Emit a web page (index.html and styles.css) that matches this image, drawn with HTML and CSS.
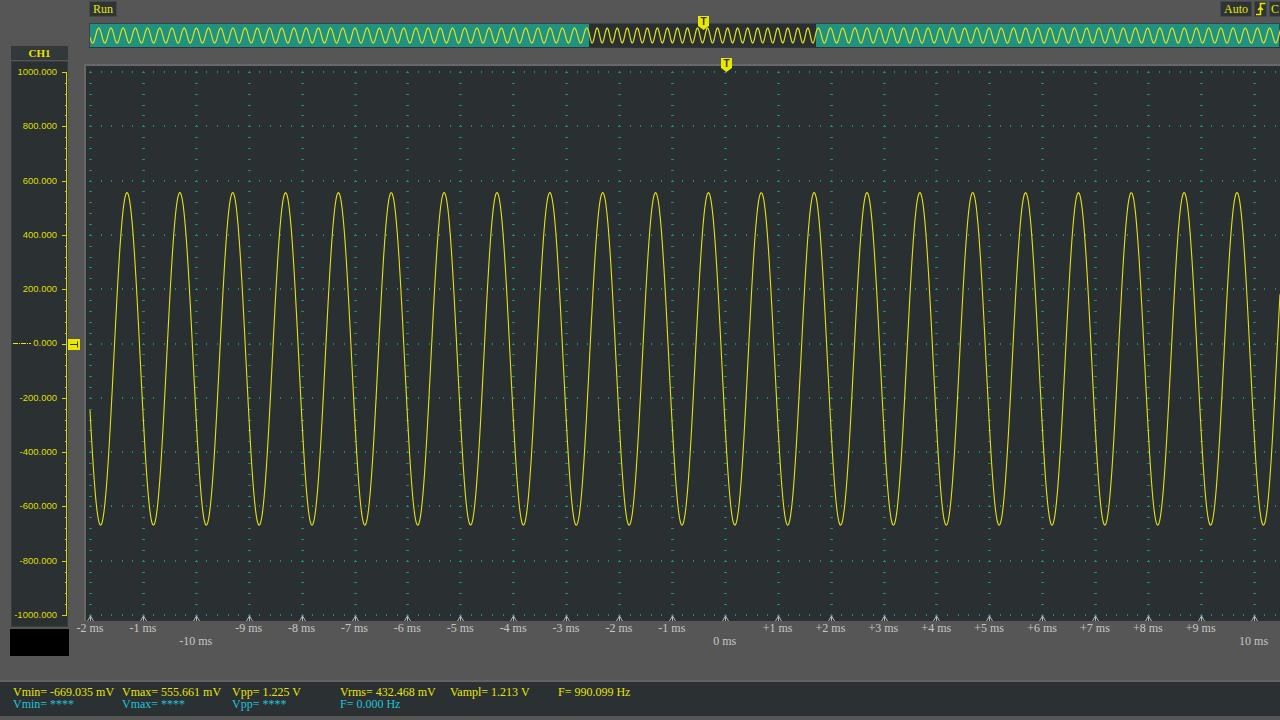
FILE: index.html
```html
<!doctype html>
<html>
    <head>
        <meta charset="utf-8"/>
        <title>CH1 scope</title>
        <link rel="stylesheet" href="styles.css">
    </head>
    <body>
        <div class="app">
            <header class="topbar">
                <span class="btn">Run</span>
                <span class="spacer"></span>
                <span class="btn">Auto</span>
                <span class="btn btn-icon">
                    <svg width="11" height="14" viewBox="0 0 11 14">
                        <path d="M1 12.5H5.5V1.5H10.5M3 8L5.5 5.5L8 8" fill="none" stroke="#e8e800" stroke-width="1.6"/>
                    </svg>
                </span>
                <span class="btn btn-cut">C</span>
            </header>
            <div class="main">
                <aside class="chan">
                    <div class="chan-title">CH1</div>
                    <div class="scale">
                        <div class="scale-labels">
                            <span>1000.000</span>
                            <span>800.000</span>
                            <span>600.000</span>
                            <span>400.000</span>
                            <span>200.000</span>
                            <span class="zero"><i class="zero-line"></i>0.000</span>
                            <span>-200.000</span>
                            <span>-400.000</span>
                            <span>-600.000</span>
                            <span>-800.000</span>
                            <span>-1000.000</span>
                        </div>
                        <svg class="scale-axis" id="axis" width="11" height="566"></svg>
                        <div class="zero-flag">
                            <svg width="12" height="11" viewBox="0 0 12 11">
                                <rect x="0" y="0" width="12" height="11" fill="#e8e800"/>
                                <path d="M2 5.5H9.5M9.5 2.5V8.5" fill="none" stroke="#3a3a10" stroke-width="1"/>
                            </svg>
                        </div>
                    </div>
                    <div class="chan-black"></div>
                </aside>
                <section class="scope">
                    <div class="overview">
                        <svg id="overview" width="1191" height="23"></svg>
                        <div class="tmark tmark-over">T</div>
                    </div>
                    <div class="plot">
                        <svg id="plot" width="1194" height="555"></svg>
                        <div class="tmark tmark-plot">T</div>
                    </div>
                    <div class="ticks">
                        <span>-2 ms</span>
                        <span>-1 ms</span>
                        <span></span>
                        <span>-9 ms</span>
                        <span>-8 ms</span>
                        <span>-7 ms</span>
                        <span>-6 ms</span>
                        <span>-5 ms</span>
                        <span>-4 ms</span>
                        <span>-3 ms</span>
                        <span>-2 ms</span>
                        <span>-1 ms</span>
                        <span></span>
                        <span>+1 ms</span>
                        <span>+2 ms</span>
                        <span>+3 ms</span>
                        <span>+4 ms</span>
                        <span>+5 ms</span>
                        <span>+6 ms</span>
                        <span>+7 ms</span>
                        <span>+8 ms</span>
                        <span>+9 ms</span>
                        <span></span>
                        <span class="tick-big t3">-10 ms</span>
                        <span class="tick-big t13">0 ms</span>
                        <span class="tick-big t23">10 ms</span>
                    </div>
                </section>
            </div>
            <footer class="meas">
                <span>Vmin= -669.035 mV</span>
                <span>Vmax= 555.661 mV</span>
                <span>Vpp= 1.225 V</span>
                <span>Vrms= 432.468 mV</span>
                <span>Vampl= 1.213 V</span>
                <span>F= 990.099 Hz</span>
                <span class="ref">Vmin= ****</span>
                <span class="ref">Vmax= ****</span>
                <span class="ref">Vpp= ****</span>
                <span class="ref">F= 0.000 Hz</span>
            </footer>
        </div>
        <script>
         (function(){
             var ns = 'http://www.w3.org/2000/svg';
             function add(svg, tag, attrs){
                 var n = document.createElementNS(ns, tag);
                 for (var k in attrs) n.setAttribute(k, attrs[k]);
                 svg.appendChild(n);
                 return n;
             }

             // main plot: page coords minus the plot's inner origin
             var plot = document.getElementById('plot');
             var ox = 86, oy = 66;
             var x0 = 90, dx = 52.9, y0 = 72, dy = 54.3;
             var grid = '', arrows = '';
             for (var k = 0; k <= 10; k++) {
                 var gy = Math.round(y0 + k * dy) - oy;
                 for (var i = 0; x0 + i * dx / 5 < 1280; i++) {
                     var gx = Math.round(x0 + i * dx / 5) - ox;
                     grid += 'M' + gx + ' ' + (gy - 1) + 'h1v2h-1z';
                 }
             }
             for (var j = 0; x0 + j * dx < 1280; j++) {
                 var vx = Math.round(x0 + j * dx) - ox;
                 for (var m = 0; m <= 50; m++) {
                     var vy = Math.round(y0 + m * dy / 5) - oy;
                     grid += 'M' + (vx - 1) + ' ' + vy + 'h3v1h-3z';
                 }
                 arrows += 'M' + (vx - 2.5) + ' 555L' + (vx + 0.5) + ' 550L' + (vx + 3.5) + ' 555M' + (vx + 0.5) + ' 550V555';
             }
             add(plot, 'path', {d: grid, fill: '#1b8a82'});
             add(plot, 'path', {d: arrows, fill: 'none', stroke: '#b8b8b8', 'stroke-width': 1});

             // 990 Hz trace, 200 mV per division
             var pts = [];
             for (var x = 90; x <= 1280; x += 0.5) {
                 var v = -56.7 + 612.35 * Math.cos(2 * Math.PI * (x - 127) / 52.857);
                 pts.push((x - ox).toFixed(1) + ',' + (343.5 - v * dy / 200 - oy).toFixed(2));
             }
             add(plot, 'polyline', {points: pts.join(' '), fill: 'none', stroke: '#e4e414', 'stroke-width': 1.1});

             // overview strip, the dark part is the visible window
             var ov = document.getElementById('overview');
             var a = 499, b = 726, per = 12.2;
             add(ov, 'rect', {x: a, y: 0, width: b - a, height: 23, fill: '#2a2f31'});
             function inWin(lx){
                 var px = 84 + (lx - a) * 1196 / (b - a);
                 return 2 * Math.PI * (px - 127) / 52.857;
             }
             function phase(lx){
                 if (lx < a) return inWin(a) - (a - lx) / per * 2 * Math.PI;
                 if (lx > b) return inWin(b) + (lx - b) / per * 2 * Math.PI;
                 return inWin(lx);
             }
             var wp = [];
             for (var lx = 0; lx <= 1191; lx += 0.5) {
                 wp.push(lx + ',' + (11.5 - 7.5 * Math.cos(phase(lx))).toFixed(2));
             }
             add(ov, 'polyline', {points: wp.join(' '), fill: 'none', stroke: '#e2e21a', 'stroke-width': 1.2});

             // vertical scale axis
             var axis = document.getElementById('axis');
             var ad = 'M9.5 11V554.5';
             for (var t = 0; t <= 50; t++) {
                 var ty = Math.round(y0 + t * dy / 5) - 61 + 0.5;
                 ad += t % 5 === 0 ? 'M5 ' + ty + 'H10' : 'M8 ' + ty + 'H10';
             }
             add(axis, 'path', {d: ad, fill: 'none', stroke: '#d6d600', 'stroke-width': 1});
         })();
        </script>
    </body>
</html>
```

FILE: styles.css
```css
* {
    margin: 0;
    padding: 0;
    box-sizing: border-box;
}
body {
    width: 1280px;
    height: 720px;
    overflow: hidden;
    background-color: #565656;
    font-family: "Liberation Serif", serif;
    font-size: 12px;
}
.app {
    display: flex;
    flex-direction: column;
    height: 720px;
}
.topbar {
    display: flex;
    align-items: flex-start;
    gap: 2px;
    height: 18px;
    padding-left: 89px;
    overflow: hidden;
}
.spacer {
    flex: 1;
}
.btn {
    height: 16px;
    padding: 0 3px;
    margin-top: 1px;
    background-color: #2e3335;
    border: 1px solid #43484a;
    color: #e8e800;
    line-height: 14px;
    white-space: nowrap;
}
.btn-icon {
    width: 13px;
    padding: 0;
    display: flex;
    align-items: center;
    justify-content: center;
}
.btn-cut {
    width: 11px;
    padding: 0 0 0 1px;
    border-right: 0;
}
.main {
    display: flex;
    height: 662px;
}
.chan {
    width: 59px;
    margin-left: 10px;
    padding-top: 28px;
    display: flex;
    flex-direction: column;
}
.chan-title {
    height: 14px;
    margin: 0 1px;
    background-color: #33383a;
    color: #e8e800;
    font-weight: bold;
    font-size: 11px;
    line-height: 14px;
    text-align: center;
}
.scale {
    position: relative;
    display: flex;
    height: 566px;
    margin: 1px 1px 0;
    background-color: #2b3032;
    box-shadow: inset 0 0 0 1px #383d3f;
}
.scale-labels {
    width: 46px;
    height: 555px;
    margin-top: 5px;
    display: flex;
    flex-direction: column;
    justify-content: space-between;
    align-items: stretch;
    font-family: "Liberation Sans", sans-serif;
    font-size: 9.5px;
    line-height: 12px;
    color: #dede00;
    text-align: right;
}
.zero {
    display: flex;
    align-items: center;
}
.zero-line {
    flex: 1;
    height: 1px;
    margin: 0 2px 0 2px;
    background: repeating-linear-gradient(90deg, #e8e800 0 5px, transparent 5px 6px, #e8e800 6px 7px, transparent 7px 8px);
}
.scale-axis {
    display: block;
}
.zero-flag {
    position: absolute;
    left: 57px;
    top: 278px;
    width: 12px;
    height: 11px;
}
.zero-flag svg {
    display: block;
}
.chan-black {
    height: 27px;
    margin-top: 2px;
    background-color: #000;
}
.scope {
    width: 1196px;
    margin-left: 15px;
}
.overview {
    position: relative;
    width: 1191px;
    height: 25px;
    margin: 5px 0 0 5px;
    background-color: #1f9282;
    border: 1px solid #3a4443;
    border-bottom-color: #303435;
}
.overview svg {
    display: block;
}
.tmark {
    position: absolute;
    width: 11px;
    height: 14px;
    background-color: #e8e800;
    clip-path: polygon(0 0, 100% 0, 100% 72%, 50% 100%, 0 72%);
    color: #3a3a10;
    font-family: "Liberation Sans", sans-serif;
    font-weight: bold;
    font-size: 10px;
    line-height: 11px;
    text-align: center;
}
.tmark-over {
    left: 608px;
    top: -8px;
}
.tmark-plot {
    left: 635px;
    top: -8px;
}
.plot {
    position: relative;
    height: 557px;
    margin-top: 16px;
    background-color: #2a2f31;
    border-top: 2px solid #686868;
    border-left: 2px solid #686868;
}
.plot svg {
    display: block;
}
.ticks {
    display: grid;
    grid-template-columns: repeat(23, 52.9px);
    grid-auto-rows: 13px;
    margin-left: -20.45px;
    padding-top: 1px;
    color: #c6c6c6;
    line-height: 13px;
    text-align: center;
    white-space: nowrap;
}
.tick-big {
    grid-row: 2;
}
.t3 {
    grid-column: 3;
}
.t13 {
    grid-column: 13;
}
.t23 {
    grid-column: 23;
}
.meas {
    display: grid;
    grid-template-columns: 109px 110px 108px 110px 108px auto;
    grid-auto-rows: 12px;
    height: 36px;
    padding: 4px 0 0 13px;
    background-color: #2b3032;
    border-top: 2px solid #626262;
    color: #e6e600;
    line-height: 12px;
    white-space: nowrap;
}
.meas .ref {
    color: #1fc4dc;
}
```
